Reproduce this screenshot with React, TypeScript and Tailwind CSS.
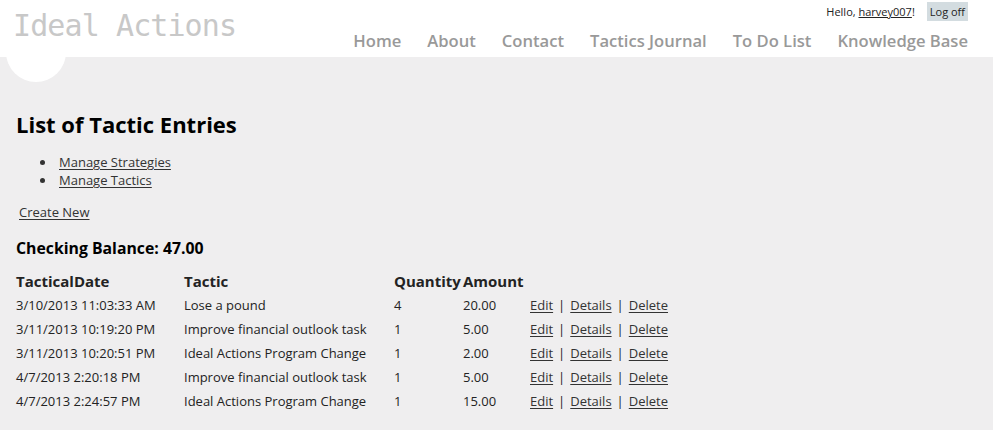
const entries = [
  { date: '3/10/2013 11:03:33 AM', tactic: 'Lose a pound', qty: '4', amount: '20.00' },
  { date: '3/11/2013 10:19:20 PM', tactic: 'Improve financial outlook task', qty: '1', amount: '5.00' },
  { date: '3/11/2013 10:20:51 PM', tactic: 'Ideal Actions Program Change', qty: '1', amount: '2.00' },
  { date: '4/7/2013 2:20:18 PM', tactic: 'Improve financial outlook task', qty: '1', amount: '5.00' },
  { date: '4/7/2013 2:24:57 PM', tactic: 'Ideal Actions Program Change', qty: '1', amount: '15.00' },
];

const menu = ['Home', 'About', 'Contact', 'Tactics Journal', 'To Do List', 'Knowledge Base'];

const link = 'text-[#333] underline underline-offset-2';

export default function App() {
  return (
    <div className="min-h-[430px] bg-[#efeeef] font-['Open_Sans',sans-serif] text-[#232323]">
      {/* header */}
      <header className="flex h-[57px] justify-between bg-white pl-[13px] pr-[25px]">
        <p className="pt-[8px] font-['DejaVu_Sans_Mono',monospace] text-[30px] leading-[36px] tracking-[-0.9px] text-[#c8c8c8]">
          Ideal Actions
        </p>
        <div className="flex flex-col items-end">
          <div className="mt-[2px] flex items-center text-[11px] leading-[19px]">
            <span>
              Hello, <span className="underline">harvey007</span>!
            </span>
            <span className="ml-[12px] bg-[#d3dce0] px-[3px]">Log off</span>
          </div>
          <nav className="mt-[8px] flex gap-[26px] text-[16.6px] font-semibold leading-[24px] text-[#999]">
            {menu.map((m) => (
              <span key={m}>{m}</span>
            ))}
          </nav>
        </div>
      </header>

      {/* body; the white half-circle is the page's accent mark */}
      <main className="relative overflow-hidden pl-[16px] pt-[53px]">
        <div className="absolute left-[6px] top-[-35px] h-[60px] w-[60px] rounded-full bg-white" />
        <h2 className="text-[22px] font-bold leading-[28px] text-black">List of Tactic Entries</h2>
        <ul className="mt-[15px] list-disc pl-[40px] text-[13px] leading-[18px] marker:text-[#333]">
          <li className="pl-[3px]">
            <span className={link}>Manage Strategies</span>
          </li>
          <li className="pl-[3px]">
            <span className={link}>Manage Tactics</span>
          </li>
        </ul>
        <p className="mt-[14px] pl-[3px] text-[13px] leading-[18px]">
          <span className={link}>Create New</span>
        </p>
        <h3 className="mt-[17px] text-[15.8px] font-bold leading-[20px] text-black">Checking Balance: 47.00</h3>

        <div className="mt-[12px] grid grid-cols-[168px_210px_69px_64px_auto] text-[13px]">
          <div className="text-[15px] font-bold leading-[23px]">TacticalDate</div>
          <div className="text-[15px] font-bold leading-[23px]">Tactic</div>
          <div className="text-[15px] font-bold leading-[23px]">Quantity</div>
          <div className="text-[15px] font-bold leading-[23px]">Amount</div>
          <div />
          {entries.map((e, i) => (
            <Row key={i} {...e} />
          ))}
        </div>
      </main>
    </div>
  );
}

function Row({ date, tactic, qty, amount }: { date: string; tactic: string; qty: string; amount: string }) {
  return (
    <>
      <div className="py-[3px] leading-[18px]">{date}</div>
      <div className="py-[3px] leading-[18px]">{tactic}</div>
      <div className="py-[3px] leading-[18px]">{qty}</div>
      <div className="py-[3px] leading-[18px]">{amount}</div>
      <div className="py-[3px] pl-[3px] leading-[18px]">
        <span className={link}>Edit</span>
        <span className="px-[5px]">|</span>
        <span className={link}>Details</span>
        <span className="px-[5px]">|</span>
        <span className={link}>Delete</span>
      </div>
    </>
  );
}
